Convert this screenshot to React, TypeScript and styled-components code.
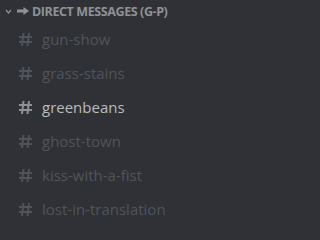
import styled, { createGlobalStyle } from "styled-components";

const GlobalStyle = createGlobalStyle`
  html, body {
    margin: 0;
    padding: 0;
    background: #2f3136;
  }
`;

const Sidebar = styled.div`
  width: 205px;
  height: 226px;
  background: #2f3136;
  font-family: "Open Sans", "Noto Sans", sans-serif;
  overflow: hidden;
`;

const Header = styled.div`
  display: flex;
  align-items: center;
  height: 22px;
  padding-left: 5px;
  color: #8e9297;
  font-size: 12.5px;
  font-weight: 700;
  letter-spacing: -0.4px;
  text-transform: uppercase;
  white-space: nowrap;
`;

const Chevron = styled.svg`
  width: 7px;
  height: 5px;
  margin-right: 5px;
`;

const Arrow = styled.svg`
  width: 12px;
  height: 8px;
  margin-right: 3px;
`;

const List = styled.div`
  display: flex;
  flex-direction: column;
`;

const Row = styled.div<{ $active?: boolean }>`
  display: flex;
  align-items: center;
  height: 34px;
  padding-left: 18px;
  gap: 9px;
  font-size: 15px;
  color: ${(p) => (p.$active ? "#b9bbbe" : "#4f545c")};
`;

const Hash = styled.svg`
  width: 15px;
  height: 15px;
  flex-shrink: 0;
`;

const channels = [
  { name: "gun-show" },
  { name: "grass-stains" },
  { name: "greenbeans", active: true },
  { name: "ghost-town" },
  { name: "kiss-with-a-fist" },
  { name: "lost-in-translation" },
];

const HashIcon = ({ color }: { color: string }) => (
  <Hash viewBox="0 0 15 15">
    <path
      d="M5.5 1 L4 14 M11 1 L9.5 14 M1 5 H14 M1 10 H14"
      stroke={color}
      strokeWidth="2"
      fill="none"
    />
  </Hash>
);

export default function App() {
  return (
    <>
      <GlobalStyle />
      <Sidebar>
        <Header>
          <Chevron viewBox="0 0 7 5">
            <path d="M1 1 L3.5 4 L6 1" stroke="#8e9297" strokeWidth="1.2" fill="none" />
          </Chevron>
          <Arrow viewBox="0 0 12 8">
            <path d="M0 2.4 H6.5 V0 L12 4 L6.5 8 V5.6 H0 Z" fill="#8e9297" />
          </Arrow>
          Direct Messages (G-P)
        </Header>
        <List>
          {channels.map((c) => (
            <Row key={c.name} $active={c.active}>
              <HashIcon color={c.active ? "#8e9297" : "#4f545c"} />
              {c.name}
            </Row>
          ))}
        </List>
      </Sidebar>
    </>
  );
}
